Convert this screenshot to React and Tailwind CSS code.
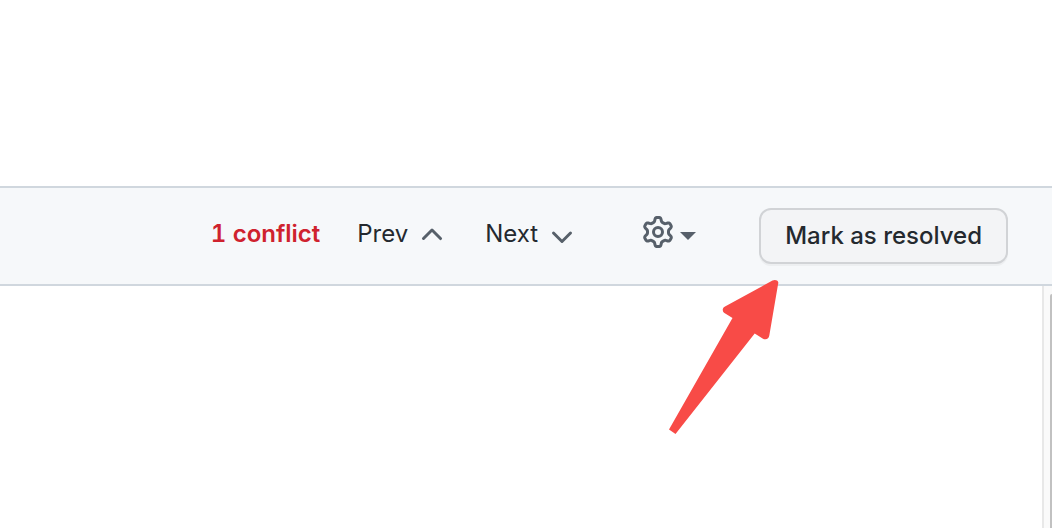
function ChevronUp() {
  return (
    <svg viewBox="0 0 16 16" className="size-8 text-[#57606a]" fill="currentColor" aria-hidden="true">
      <path d="M3.22 10.78a.75.75 0 0 0 1.06 0L8 7.06l3.72 3.72a.75.75 0 1 0 1.06-1.06L8.53 5.47a.75.75 0 0 0-1.06 0L3.22 9.72a.75.75 0 0 0 0 1.06Z" />
    </svg>
  );
}

function ChevronDown() {
  return (
    <svg viewBox="0 0 16 16" className="size-8 text-[#57606a]" fill="currentColor" aria-hidden="true">
      <path d="M12.78 6.97a.75.75 0 0 1 0 1.06l-4.25 4.25a.75.75 0 0 1-1.06 0L3.22 8.03a.75.75 0 0 1 1.06-1.06L8 10.69l3.72-3.72a.75.75 0 0 1 1.06 0Z" />
    </svg>
  );
}

function Gear() {
  return (
    <svg viewBox="0 0 16 16" className="size-8" fill="currentColor" aria-hidden="true">
      <path d="M8 0a8.2 8.2 0 0 1 .701.031C9.444.095 9.99.645 10.16 1.29l.288 1.107c.018.066.079.158.212.224.231.114.454.243.668.386.123.082.233.09.299.071l1.103-.303c.644-.176 1.392.021 1.82.63.27.385.506.792.704 1.218.315.675.111 1.422-.364 1.891l-.814.806c-.049.048-.098.147-.088.294.016.257.016.515 0 .772-.01.147.038.246.088.294l.814.806c.475.469.679 1.216.364 1.891a7.977 7.977 0 0 1-.704 1.217c-.428.61-1.176.807-1.82.63l-1.102-.302c-.067-.019-.177-.011-.3.071a5.909 5.909 0 0 1-.668.386c-.133.066-.194.158-.211.224l-.29 1.106c-.168.646-.715 1.196-1.458 1.26a8.006 8.006 0 0 1-1.402 0c-.743-.064-1.289-.614-1.458-1.26l-.289-1.106c-.018-.066-.079-.158-.212-.224a5.738 5.738 0 0 1-.668-.386c-.123-.082-.233-.09-.299-.071l-1.103.303c-.644.176-1.392-.021-1.82-.63a8.12 8.12 0 0 1-.704-1.218c-.315-.675-.111-1.422.363-1.891l.815-.806c.05-.048.098-.147.088-.294a6.214 6.214 0 0 1 0-.772c.01-.147-.038-.246-.088-.294l-.815-.806C.635 6.045.431 5.298.746 4.623a7.92 7.92 0 0 1 .704-1.217c.428-.61 1.176-.807 1.82-.63l1.102.302c.067.019.177.011.3-.071.214-.143.437-.272.668-.386.133-.066.194-.158.211-.224l.29-1.106C6.009.645 6.556.095 7.299.03 7.53.01 7.764 0 8 0Zm-.571 1.525c-.036.003-.108.036-.137.146l-.289 1.105c-.147.561-.549.967-.998 1.189-.173.086-.34.183-.5.29-.417.278-.97.423-1.529.27l-1.103-.303c-.109-.03-.175.016-.195.045-.22.312-.412.644-.573.99-.014.031-.021.11.059.19l.815.806c.411.406.562.957.53 1.456a4.709 4.709 0 0 0 0 .582c.032.499-.119 1.05-.53 1.456l-.815.806c-.081.08-.073.159-.059.19.162.346.353.677.573.989.02.03.085.076.195.046l1.102-.303c.56-.153 1.113-.008 1.53.27.161.107.328.204.501.29.447.222.85.629.997 1.189l.289 1.105c.029.109.101.143.137.146a6.6 6.6 0 0 0 1.142 0c.036-.003.108-.036.137-.146l.289-1.105c.147-.561.549-.967.998-1.189.173-.086.34-.183.5-.29.417-.278.97-.423 1.529-.27l1.103.303c.109.029.175-.016.195-.045.22-.313.411-.644.573-.99.014-.031.021-.11-.059-.19l-.815-.806c-.411-.406-.562-.957-.53-1.456a4.709 4.709 0 0 0 0-.582c-.032-.499.119-1.05.53-1.456l.815-.806c.081-.08.073-.159.059-.19a6.464 6.464 0 0 0-.573-.989c-.02-.03-.085-.076-.195-.046l-1.102.303c-.56.153-1.113.008-1.53-.27a4.44 4.44 0 0 0-.501-.29c-.447-.222-.85-.629-.997-1.189l-.289-1.105c-.029-.11-.101-.143-.137-.146a6.6 6.6 0 0 0-1.142 0ZM11 8a3 3 0 1 1-6 0 3 3 0 0 1 6 0ZM9.5 8a1.5 1.5 0 1 0-3.001.001A1.5 1.5 0 0 0 9.5 8Z" />
    </svg>
  );
}

function Arrow() {
  return (
    <svg
      viewBox="0 0 112 156"
      className="pointer-events-none absolute top-[70px] left-0 h-[156px] w-[112px] -translate-x-[91px] text-[#f84b47]"
      fill="currentColor"
      aria-hidden="true"
    >
      <path d="M104.5 2.6Q107 1.6 109 2.6T110 6.600L101.300 57.500Q100.500 61.300 97.500 61.300Q96.300 61.500 95 60.700L86.700 55.600L7.500 156L1 151.500L64.500 40L56 34.700Q54.700 33.700 54.700 31.500Q54.800 29.700 57 28.500Z" />
    </svg>
  );
}

export default function App() {
  return (
    <div className="flex min-h-screen flex-col bg-white font-['Inter','Liberation_Sans',sans-serif] text-2xl text-[#24292f]">
      <div className="h-[186px]" />
      <header className="flex items-center justify-end border-y-2 border-[#d0d7de] bg-[#f6f8fa] py-5 pr-11">
        <div className="flex items-center gap-[37px] pb-1">
          <span className="font-semibold text-[#cf222e] tabular-nums">1 conflict</span>
          <button type="button" className="flex items-center gap-2">
            Prev
            <ChevronUp />
          </button>
          <button type="button" className="flex items-center gap-2">
            Next
            <ChevronDown />
          </button>
        </div>
        <button type="button" aria-label="Settings" className="mr-[63px] ml-16 flex items-center gap-1.5 pb-2 text-[#57606a]">
          <Gear />
          <svg viewBox="0 0 16 8" className="mt-2 h-2 w-4" fill="currentColor" aria-hidden="true">
            <path d="M0 0h16L8 8Z" />
          </svg>
        </button>
        <div className="relative">
          <button
            type="button"
            className="h-14 rounded-xl border-2 border-[#d1d3d6] bg-[#f3f4f6] px-6 font-medium whitespace-nowrap shadow-[0_2px_0_rgba(27,31,36,0.04)]"
          >
            Mark as resolved
          </button>
          <Arrow />
        </div>
      </header>
      <main className="flex flex-1 justify-end">
        <div className="flex w-2.5 border-l-2 border-[#e8e8e8] bg-[#fafafa] pt-2 pl-1.5">
          <div className="flex-1 rounded-tl-sm bg-[#c1c1c1]" />
        </div>
      </main>
    </div>
  );
}
